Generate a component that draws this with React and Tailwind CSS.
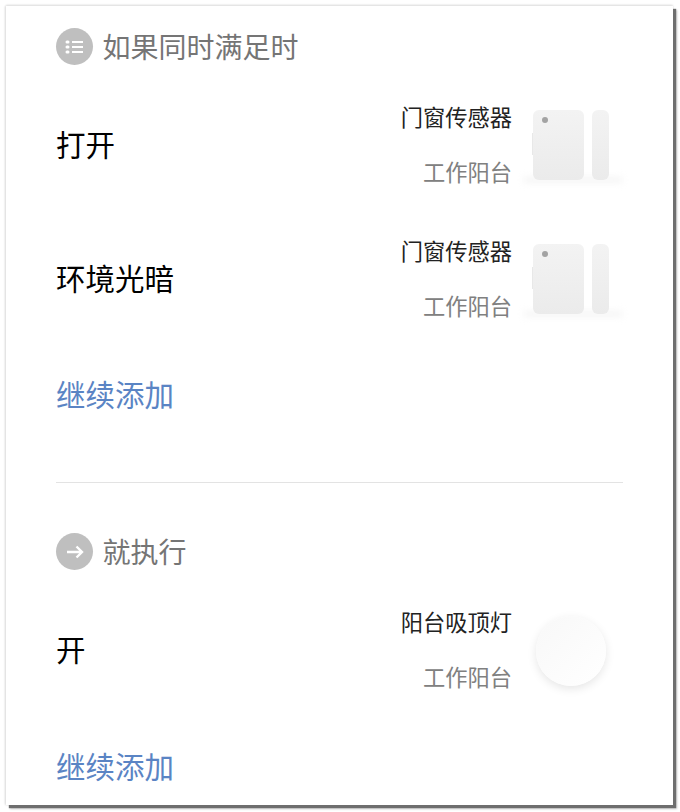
const cjk = "font-['Noto_Sans_CJK_SC','Noto_Sans',sans-serif]";

function SectionTitle({ icon, children }) {
	return (
		<div className="flex h-[37px] items-center gap-[9.5px]">
			<div className="flex h-[37px] w-[37px] items-center justify-center rounded-full bg-[#bfbfbf]">
				{icon}
			</div>
			<span className="text-[28px] leading-[37px] text-[#757575]">{children}</span>
		</div>
	);
}

function ListIcon() {
	return (
		<svg width="20" height="16" viewBox="0 0 20 16" fill="none" stroke="#fff" strokeWidth="2.2">
			<path d="M7 3h11M7 8h11M7 13h11" />
			<path d="M2 3h1M2 8h1M2 13h1" strokeLinecap="round" strokeWidth="3" />
		</svg>
	);
}

function ArrowIcon() {
	return (
		<svg width="22" height="18" viewBox="0 0 22 18" fill="none" stroke="#fff" strokeWidth="2.4">
			<path d="M3 9h15M12.5 3.5L18 9l-5.5 5.5" />
		</svg>
	);
}

function SensorPic() {
	return (
		<div className="relative mt-[4px] flex h-[70px] w-[76px] gap-[8px]">
			<div className="relative h-[70px] w-[51px] rounded-[6px] bg-gradient-to-b from-[#f3f3f3] to-[#ebebeb]">
				<div className="absolute left-[9px] top-[7px] h-[6px] w-[6px] rounded-full bg-[#a3a3a3]" />
				<div className="absolute left-[-1px] top-[23px] h-[22px] w-[1px] bg-[#e8e8e8]" />
			</div>
			<div className="h-[70px] w-[17px] rounded-[6px] bg-gradient-to-b from-[#f3f3f3] to-[#ebebeb]" />
			<div className="absolute -left-[10px] bottom-[-3px] -z-10 h-[6px] w-[100px] rounded-full bg-[#f5f5f5] blur-[3px]" />
		</div>
	);
}

function LampPic() {
	return (
		<div className="mt-[6px] h-[70px] w-[70px] rounded-full bg-gradient-to-br from-[#f8f8f8] to-white shadow-[0_3px_10px_rgba(0,0,0,0.1)]" />
	);
}

function Row({ label, name, place, pic, className = "" }) {
	return (
		<div className={`flex h-[134px] items-center pr-[14px] ${className}`}>
			<span className="flex-1 text-[29.5px] leading-[40px] text-black">{label}</span>
			<div className="flex h-[85px] flex-col items-end justify-between">
				<span className="text-[22.25px] leading-[30px] text-[#222]">{name}</span>
				<span className="text-[22.25px] leading-[30px] text-[#808080]">{place}</span>
			</div>
			<div className="ml-[21px] flex w-[76px] justify-center">{pic}</div>
		</div>
	);
}

function AddMore({ className = "" }) {
	return <div className={`text-[29.5px] leading-[40px] text-[#5a84c4] ${className}`}>继续添加</div>;
}

export default function App() {
	return (
		<div className={`${cjk} h-[812px] w-[680px] overflow-hidden bg-white pl-[6px] pt-[6px] font-normal`}>
			<div className="isolate h-[799px] w-[667px] overflow-hidden bg-white pl-[50px] pr-[50px] pt-[22px] shadow-[3px_3px_1px_#6e6e6e,4px_4px_2px_#c4c4c4,0_-1px_2px_#ddd,-1px_0_2px_#ddd]">
				<SectionTitle icon={<ListIcon />}>如果同时满足时</SectionTitle>
				<div className="pt-[11px]">
					<Row label="打开" name="门窗传感器" place="工作阳台" pic={<SensorPic />} />
					<Row label="环境光暗" name="门窗传感器" place="工作阳台" pic={<SensorPic />} />
				</div>
				<AddMore className="mt-[29px]" />
				<div className="mt-[69px] h-px bg-[#e3e3e3]" />
				<div className="pt-[50px]">
					<SectionTitle icon={<ArrowIcon />}>就执行</SectionTitle>
				</div>
				<Row label="开" name="阳台吸顶灯" place="工作阳台" pic={<LampPic />} className="mt-[11px]" />
				<AddMore className="mt-[30px]" />
			</div>
		</div>
	);
}
